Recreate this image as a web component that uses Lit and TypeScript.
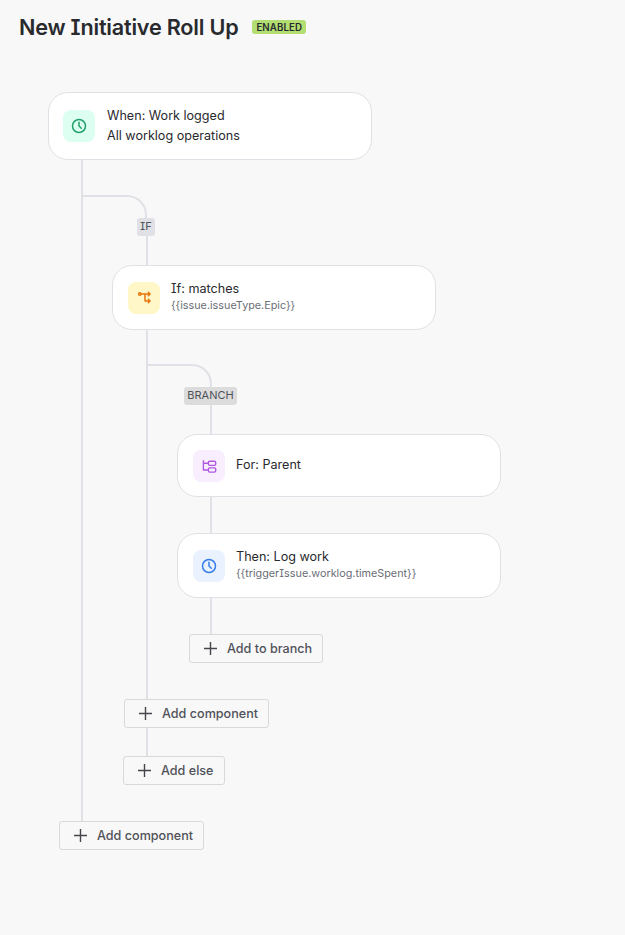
import { LitElement, html, css, svg } from "lit";
import { customElement } from "lit/decorators.js";

const clock = html`<svg viewBox="0 0 16 16" width="16" height="16" fill="none" stroke="currentColor" stroke-width="1.5" stroke-linecap="round" stroke-linejoin="round"><circle cx="8" cy="8" r="6.5"/><path d="M8 4.3V8l2.3 2.2"/></svg>`;
const branch = html`<svg viewBox="0 0 16 16" width="16" height="16" fill="none" stroke="currentColor" stroke-width="1.5" stroke-linecap="round" stroke-linejoin="round"><circle cx="3.8" cy="4" r="1.2"/><path d="M5 4h9M12.3 2.2l1.8 1.8-1.8 1.8M9 4v7h5M12.3 9.2l1.8 1.8-1.8 1.8"/></svg>`;
const tree = html`<svg viewBox="0 0 16 16" width="16" height="16" fill="none" stroke="currentColor" stroke-width="1.4" stroke-linejoin="round"><path d="M2.4 2.3V12h5M2.4 5.3h5"/><rect x="7.4" y="3.2" width="7.3" height="4.2" rx="1.3"/><rect x="7.4" y="9.9" width="7.3" height="4.2" rx="1.3"/></svg>`;
const plus = svg`<path d="M6.5 0v13M0 6.5h13" stroke="currentColor" stroke-width="1.4"/>`;

@customElement("app-root")
export class AppRoot extends LitElement {
  static styles = css`
    :host {
      display: block;
      width: 625px;
      height: 935px;
      overflow: hidden;
      background: #f8f8f8;
      font-family: Inter, "Noto Sans", sans-serif;
      font-feature-settings: "cv08" 1;
      color: #292a2e;
    }
    header {
      display: flex;
      align-items: center;
      gap: 14px;
      height: 54px;
      padding-left: 19px;
    }
    h1 {
      margin: 0;
      font-size: 21.6px;
      font-weight: 600;
      letter-spacing: -0.2px;
      line-height: 28px;
    }
    .status {
      display: flex;
      align-items: center;
      height: 14px;
      padding: 0 4px;
      border-radius: 3px;
      background: #b3df72;
      font-size: 9.7px;
      font-weight: 600;
      letter-spacing: 0.1px;
    }
    .tree {
      margin: 38px 0 0 48px;
      display: flex;
      flex-direction: column;
      align-items: flex-start;
    }
    .card {
      box-sizing: border-box;
      width: 324px;
      display: flex;
      align-items: center;
      gap: 11px;
      padding: 0 14px 0 15px;
      background: #fff;
      border: 1px solid #dfe1e6;
      border-radius: 20px;
      flex: none;
    }
    .h68 { height: 68px; gap: 12px; padding-left: 14px; }
    .h65 { height: 65px; }
    .h63 { height: 63px; }
    .h63 .text { padding-bottom: 2px; }
    .ico {
      flex: none;
      width: 32px;
      height: 32px;
      border-radius: 8px;
      display: flex;
      align-items: center;
      justify-content: center;
    }
    .green { background: #dcfff1; color: #22a06b; }
    .yellow { background: #fff7c7; color: #e8760f; }
    .purple { background: #f8eefe; color: #af59e1; }
    .blue { background: #e9f2fe; color: #357de8; }
    .title { font-size: 12.6px; line-height: 20px; }
    .sub { font-size: 10.8px; line-height: 14px; margin-bottom: 3px; color: #6b6e76; }
    .rail {
      position: relative;
      display: flex;
      flex-direction: column;
      align-items: flex-start;
    }
    .rail::before {
      content: "";
      position: absolute;
      top: 0;
      bottom: 0;
      width: 2px;
      background: #dfe1e6;
    }
    .outer { width: 100%; }
    .outer::before { left: 33px; }
    .inner { margin-left: 64px; }
    .inner::before { left: 34px; }
    .elbow {
      box-sizing: border-box;
      height: 23px;
      border-top: 2px solid #dfe1e6;
      border-right: 2px solid #dfe1e6;
      border-top-right-radius: 20px;
    }
    .e1 { margin: 35px 0 0 34px; width: 65px; }
    .e2 { margin: 34px 0 0 35px; width: 65px; }
    .stem { width: 2px; background: #dfe1e6; flex: none; }
    .s1 { margin-left: 98px; height: 29px; }
    .s2 { margin-left: 98px; height: 29px; }
    .s3 { margin-left: 98px; height: 36px; }
    .badge {
      box-sizing: border-box;
      height: 18px;
      padding-bottom: 2px;
      display: flex;
      align-items: center;
      justify-content: center;
      border-radius: 3px;
      font-size: 11px;
      color: #505258;
    }
    .b-if { width: 18px; margin-left: 89px; background: #dfe1e6; }
    .b-branch { width: 53px; margin-left: 72px; background: #dcdcdc; }
    .indent { margin-left: 64px; }
    .indent2 { margin-left: 65px; }
    button {
      box-sizing: border-box;
      height: 29px;
      display: flex;
      align-items: center;
      gap: 10px;
      padding: 0 0 1px 14px;
      background: #f8f8f8;
      border: 1px solid #d9d9d9;
      border-radius: 3px;
      font: inherit;
      font-size: 12.6px;
      font-weight: 500;
      color: #505258;
      flex: none;
      position: relative;
    }
    button svg { flex: none; color: #44464c; }
    .add-branch { width: 134px; margin-left: 77px; }
    .add-comp-b { width: 145px; margin: 36px 0 0 12px; }
    .add-else { width: 102px; margin: 0 0 0 75px; }
    .add-comp-a { width: 145px; margin: 0 0 0 11px; }
    .tail-in { height: 28px; flex: none; }
    .tail { height: 36px; flex: none; }
  `;

  private card(
    h: string,
    tone: string,
    icon: unknown,
    title: string,
    sub?: string,
    plain = false
  ) {
    return html`<div class="card ${h}">
      <div class="ico ${tone}">${icon}</div>
      <div class="text">
        <div class="title">${title}</div>
        ${sub ? html`<div class=${plain ? "title" : "sub"}>${sub}</div>` : ""}
      </div>
    </div>`;
  }

  private btn(cls: string, label: string) {
    return html`<button class=${cls}>
      <svg width="13" height="13" viewBox="0 0 13 13" fill="none">${plus}</svg>${label}
    </button>`;
  }

  render() {
    return html`
      <header>
        <h1>New Initiative Roll Up</h1>
        <span class="status">ENABLED</span>
      </header>
      <div class="tree">
        ${this.card("h68", "green", clock, "When: Work logged", "All worklog operations", true)}
        <div class="rail outer">
          <div class="elbow e1"></div>
          <div class="badge b-if">IF</div>
          <div class="stem s1"></div>
          <div class="indent">
            ${this.card("h65", "yellow", branch, "If: matches", "{{issue.issueType.Epic}}")}
          </div>
          <div class="rail inner">
            <div class="elbow e2"></div>
            <div class="badge b-branch">BRANCH</div>
            <div class="stem s2"></div>
            <div class="indent2">${this.card("h63", "purple", tree, "For: Parent")}</div>
            <div class="stem s3"></div>
            <div class="indent2">
              ${this.card("h65", "blue", clock, "Then: Log work", "{{triggerIssue.worklog.timeSpent}}")}
            </div>
            <div class="stem s3"></div>
            ${this.btn("add-branch", "Add to branch")}
            ${this.btn("add-comp-b", "Add component")}
            <div class="tail-in"></div>
          </div>
          ${this.btn("add-else", "Add else")}
          <div class="tail"></div>
        </div>
        ${this.btn("add-comp-a", "Add component")}
      </div>
    `;
  }
}
